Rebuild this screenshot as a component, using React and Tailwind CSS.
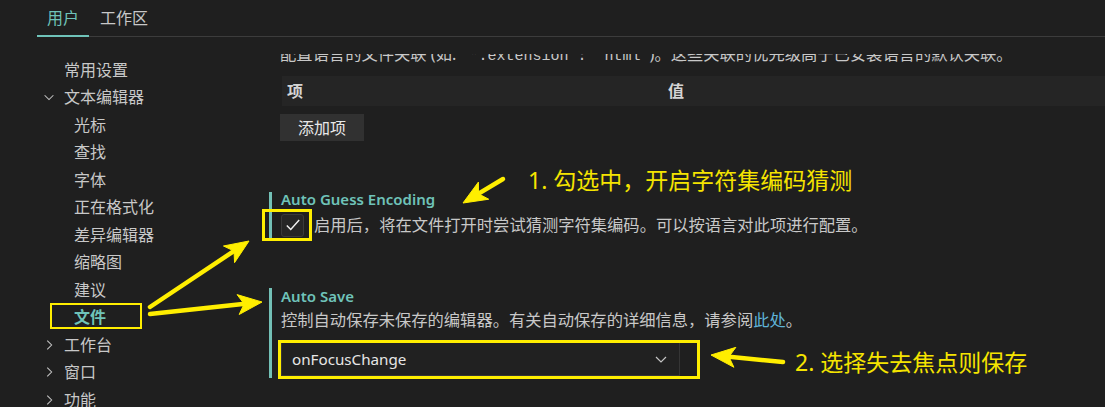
import React from "react";

const navItems = [
  { title: "常用设置", level: 0 },
  { title: "文本编辑器", level: 0, chevron: "down" },
  { title: "光标", level: 1 },
  { title: "查找", level: 1 },
  { title: "字体", level: 1 },
  { title: "正在格式化", level: 1 },
  { title: "差异编辑器", level: 1 },
  { title: "缩略图", level: 1 },
  { title: "建议", level: 1 },
  { title: "文件", level: 1, active: true },
  { title: "工作台", level: 0, chevron: "right" },
  { title: "窗口", level: 0, chevron: "right" },
  { title: "功能", level: 0, chevron: "right" },
];

const arrows = [
  { from: [503, 179], to: [463, 203] },
  { from: [150, 307], to: [249, 241] },
  { from: [150, 314], to: [262, 302] },
  { from: [783, 362], to: [711, 355] },
];

// arrow head with a small notch, computed from the direction of the line
const headPoints = (from, to) => {
  const dx = to[0] - from[0];
  const dy = to[1] - from[1];
  const len = Math.sqrt(dx * dx + dy * dy);
  const ux = dx / len;
  const uy = dy / len;
  const px = -uy;
  const py = ux;
  const L = 24;
  const W = 10;
  const back = [to[0] - ux * L, to[1] - uy * L];
  const notch = [to[0] - ux * (L - 6), to[1] - uy * (L - 6)];
  return [
    to,
    [back[0] + px * W, back[1] + py * W],
    notch,
    [back[0] - px * W, back[1] - py * W],
  ]
    .map((p) => `${p[0]},${p[1]}`)
    .join(" ");
};

const ChevronDown = ({ className }) => (
  <svg className={className} viewBox="0 0 16 16" fill="none">
    <path d="M3 6l5 5 5-5" stroke="currentColor" strokeWidth="1.2" />
  </svg>
);

const ChevronRight = ({ className }) => (
  <svg className={className} viewBox="0 0 16 16" fill="none">
    <path d="M6 3l5 5-5 5" stroke="currentColor" strokeWidth="1.2" />
  </svg>
);

const NavItem = ({ item }) => {
  return (
    <div
      className={`flex items-center h-[27.5px] text-[16px] ${
        item.level === 0 ? "pl-[42px]" : "pl-[74px]"
      }`}
    >
      {item.level === 0 && (
        <div className="w-[22px] flex items-center text-[#c5c5c5]">
          {item.chevron === "down" && <ChevronDown className="w-[14px] h-[14px]" />}
          {item.chevron === "right" && <ChevronRight className="w-[14px] h-[14px]" />}
        </div>
      )}
      <span className={item.active ? "font-bold text-[#6fc3b9]" : "text-[#c8c8c8]"}>
        {item.title}
      </span>
    </div>
  );
};

const App = () => {
  return (
    <div className="relative w-[1105px] h-[407px] overflow-hidden bg-[#1f1f1f] text-[#cccccc] font-['Noto_Sans','Noto_Sans_CJK_SC',sans-serif]">
      {/* tabs */}
      <div className="ml-[37px] h-[37px] flex border-b border-[#3c3c3c]">
        <div className="flex items-center px-[10px] text-[16px] text-[#6fc3b9] border-b-2 border-[#6fc3b9] -mb-px">
          用户
        </div>
        <div className="flex items-center pl-[11px] text-[16px] text-[#c8c8c8]">工作区</div>
      </div>

      <div className="flex h-[370px]">
        {/* tree */}
        <div className="w-[269px] shrink-0 pt-[19px]">
          {navItems.map((item) => (
            <NavItem key={item.title} item={item} />
          ))}
        </div>

        {/* settings list, scrolled a little so the first line is cut */}
        <div className="flex-1 mt-[17px] h-[353px] overflow-hidden">
          <div className="-mt-[11px]">
            <div className="pl-[11px]">
              <div className="h-[22px] text-[16.3px] leading-[22px] whitespace-nowrap text-[#c8c8c8]">
                配置语言的文件关联 (如:{" "}
                <span className="font-['Liberation_Mono',monospace] text-[15px] leading-[22px]">
                  "*.extension": "html"
                </span>
                )。这些关联的优先级高于已安装语言的默认关联。
              </div>
              <div className="mt-[11px] ml-[2px] h-[30px] bg-[#252525] flex items-center text-[16px] font-semibold text-[#d4d4d4]">
                <div className="w-[381px] pl-[5px]">项</div>
                <div className="pl-[5px]">值</div>
              </div>
              <div className="mt-[8px] w-[84px] h-[27px] bg-[#313131] flex items-center justify-center text-[16px] text-[#e8e8e8]">
                添加项
              </div>
            </div>

            {/* auto guess encoding */}
            <div className="mt-[51px] border-l-[3px] border-[#73c0b6] pl-[9px] h-[47px]">
              <div className="h-[19px] leading-[15px] text-[15px] font-semibold text-[#6fc3b9]">
                Auto Guess Encoding
              </div>
              <div className="mt-[2px] flex items-center">
                <div className="w-[23px] h-[23px] bg-[#262626] border border-[#3a3a3a] rounded-[3px] flex items-center justify-center">
                  <svg className="w-[18px] h-[18px]" viewBox="0 0 16 16" fill="none">
                    <path d="M2.5 8.5l3.5 3.5 7.5-8.5" stroke="#f0f0f0" strokeWidth="1.3" />
                  </svg>
                </div>
                <div className="ml-[10px] text-[16.3px] text-[#c8c8c8] whitespace-nowrap">
                  启用后，将在文件打开时尝试猜测字符集编码。可以按语言对此项进行配置。
                </div>
              </div>
            </div>

            {/* auto save */}
            <div className="mt-[49px] border-l-[3px] border-[#73c0b6] pl-[9px] h-[90px]">
              <div className="h-[20px] leading-[16px] text-[15px] font-semibold text-[#6fc3b9]">
                Auto Save
              </div>
              <div className="mt-[2px] h-[22px] leading-[20px] text-[16.3px] text-[#c8c8c8] whitespace-nowrap">
                控制自动保存未保存的编辑器。有关自动保存的详细信息，请参阅
                <span className="text-[#5fb4d8]">此处</span>。
              </div>
              <div className="mt-[10px] w-[399px] h-[34px] bg-[#212121] border border-[#353535] flex items-center pl-[10px] pr-[10px]">
                <span className="flex-1 text-[15.2px] text-[#e6e6e6]">onFocusChange</span>
                <ChevronDown className="w-[16px] h-[16px] text-[#c5c5c5]" />
              </div>
            </div>
          </div>
        </div>
      </div>

      {/* annotations */}
      <div className="absolute left-[262px] top-[209px] w-[50px] h-[32px] border-[3px] border-[#ffee00]" />
      <div className="absolute left-[50px] top-[303px] w-[92px] h-[26px] border-[2px] border-[#ffee00]" />
      <div className="absolute left-[278px] top-[340px] w-[422px] h-[39px] border-[3px] border-[#ffee00]" />

      <svg className="absolute inset-0 w-[1105px] h-[407px] pointer-events-none">
        {arrows.map((a, i) => (
          <g key={i} fill="#ffee00" stroke="#ffee00">
            <line
              x1={a.from[0]}
              y1={a.from[1]}
              x2={(a.from[0] + a.to[0]) / 2 + (a.to[0] - a.from[0]) * 0.35}
              y2={(a.from[1] + a.to[1]) / 2 + (a.to[1] - a.from[1]) * 0.35}
              strokeWidth="4.5"
              strokeLinecap="round"
            />
            <polygon points={headPoints(a.from, a.to)} strokeWidth="1" />
          </g>
        ))}
      </svg>

      <div className="absolute left-[528px] top-[166px] text-[23px] leading-[28px] text-[#f5e400] whitespace-nowrap">
        1. 勾选中，开启字符集编码猜测
      </div>
      <div className="absolute left-[795px] top-[348px] text-[23px] leading-[28px] text-[#f5e400] whitespace-nowrap">
        2. 选择失去焦点则保存
      </div>
    </div>
  );
};

export default App;
